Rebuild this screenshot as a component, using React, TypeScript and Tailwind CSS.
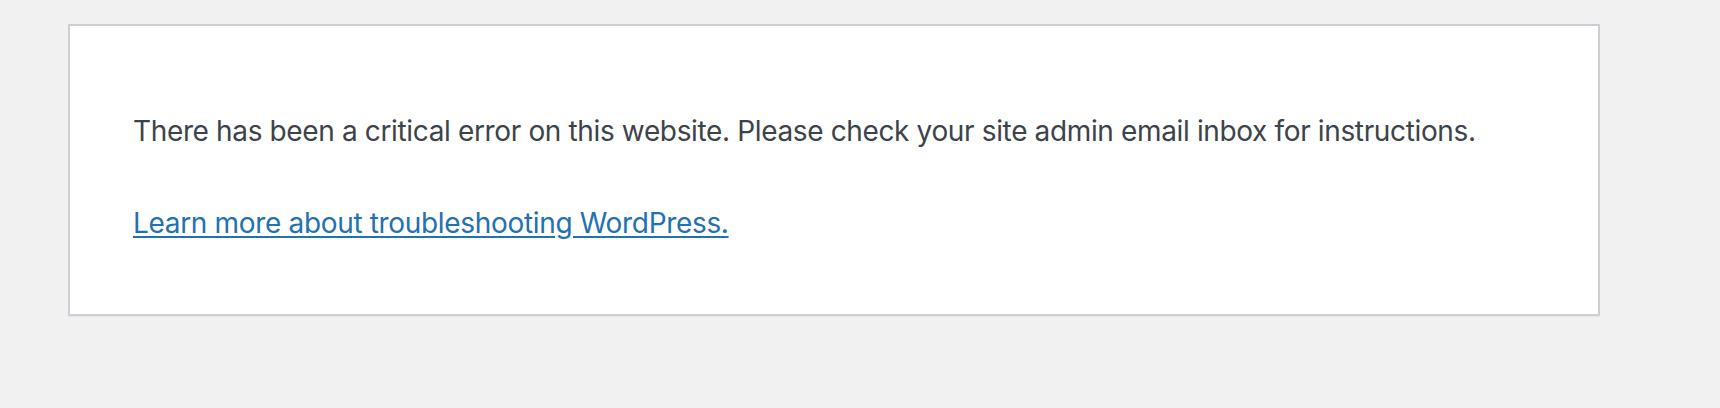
import React from 'react';

const App = () => {
  return (
    <div className="min-h-screen w-full bg-[#f1f1f1] pt-[24px] pl-[68px]">
      {/* Error box */}
      <div
        className="w-[1532px] border-2 border-[#ccd0d4] bg-white pl-[63px] pr-[40px] pt-[82px] pb-[67px] shadow-[0_1px_1px_rgba(0,0,0,0.04)]"
        style={{ fontFamily: 'Inter, "Noto Sans", sans-serif' }}
      >
        <p className="whitespace-nowrap text-[28px] leading-[47px] tracking-[-0.36px] text-[#3c434a]">
          There has been a critical error on this website. Please check your site admin email inbox for instructions.
        </p>
        <p className="mt-[45px] text-[28px] leading-[47px] tracking-[-0.33px]">
          <a href="#" className="text-[#2271b1] underline underline-offset-[3px]">
            Learn more about troubleshooting WordPress.
          </a>
        </p>
      </div>
    </div>
  );
};

export default App;
